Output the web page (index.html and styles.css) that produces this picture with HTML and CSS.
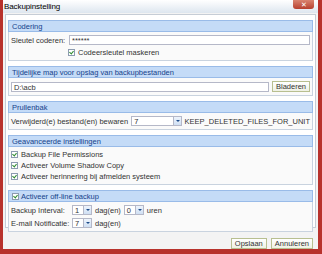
FILE: index.html
```html
<!DOCTYPE html>
<html lang="nl">

<head>
    <meta charset="UTF-8">
    <title>Backupinstelling</title>
    <link rel="stylesheet" href="styles.css">
</head>

<body>
    <div class="window">
        <div class="titlebar">
            <span class="title">Backupinstelling</span>
            <span class="close">&#x2715;</span>
        </div>

        <div class="content">
            <div class="sections">
                <!-- Codering -->
                <div class="panel">
                    <div class="panel-head">Codering</div>
                    <div class="panel-body">
                        <div class="row">
                            <span class="label lbl-key">Sleutel coderen:</span>
                            <span class="field grow">******</span>
                        </div>
                        <div class="row indent">
                            <span class="check"></span>
                            <span class="label">Codeersleutel maskeren</span>
                        </div>
                    </div>
                </div>

                <!-- Tijdelijke map -->
                <div class="panel">
                    <div class="panel-head">Tijdelijke map voor opslag van backupbestanden</div>
                    <div class="panel-body">
                        <div class="row">
                            <span class="field grow">D:\acb</span>
                            <button class="btn">Bladeren</button>
                        </div>
                    </div>
                </div>

                <!-- Prullenbak -->
                <div class="panel">
                    <div class="panel-head">Prullenbak</div>
                    <div class="panel-body">
                        <div class="row">
                            <span class="label">Verwijderd(e) bestand(en) bewaren</span>
                            <span class="combo wide"><span class="field">7</span><span class="arrow"></span></span>
                            <span class="label">KEEP_DELETED_FILES_FOR_UNIT</span>
                        </div>
                    </div>
                </div>

                <!-- Geavanceerde instellingen -->
                <div class="panel">
                    <div class="panel-head">Geavanceerde instellingen</div>
                    <div class="panel-body checks">
                        <div class="row"><span class="check"></span><span class="label">Backup File Permissions</span></div>
                        <div class="row"><span class="check"></span><span class="label">Activeer Volume Shadow Copy</span></div>
                        <div class="row"><span class="check"></span><span class="label">Activeer herinnering bij afmelden systeem</span></div>
                    </div>
                </div>

                <!-- Off-line backup -->
                <div class="panel">
                    <div class="panel-head"><span class="check"></span>Activeer off-line backup</div>
                    <div class="panel-body">
                        <div class="row">
                            <span class="label lbl-int">Backup Interval:</span>
                            <span class="combo"><span class="field">1</span><span class="arrow"></span></span>
                            <span class="label">dag(en)</span>
                            <span class="combo"><span class="field">0</span><span class="arrow"></span></span>
                            <span class="label">uren</span>
                        </div>
                        <div class="row">
                            <span class="label lbl-int">E-mail Notificatie:</span>
                            <span class="combo"><span class="field">7</span><span class="arrow"></span></span>
                            <span class="label">dag(en)</span>
                        </div>
                    </div>
                </div>
            </div>

            <div class="buttons">
                <button class="btn">Opslaan</button>
                <button class="btn">Annuleren</button>
            </div>
        </div>
    </div>
</body>

</html>
```

FILE: styles.css
```css
:root {
    --frame-red: #b8322c;
    --head-bg: #c4dbf7;
    --head-border: #99bbe8;
    --head-text: #15428b;
    --text-color: #333;
    --field-border: #b5b8c8;
    --font-family: "Liberation Sans", Arial, sans-serif;
}

* {
    box-sizing: border-box;
}

body {
    margin: 0;
    width: 322px;
    height: 254px;
    background-color: var(--frame-red);
    font-family: var(--font-family);
    font-size: 7.5px;
    color: var(--text-color);
    overflow: hidden;
}

.window {
    margin: 0 4px 0 3px;
    height: 249px;
    display: flex;
    flex-direction: column;
    background-color: #f3f3f3;
}

.titlebar {
    height: 13px;
    display: flex;
    align-items: center;
    justify-content: space-between;
    padding-left: 1px;
    background: linear-gradient(to bottom, #ffffff, #dde6ef);
}

.title {
    color: #000;
    font-size: 8px;
    letter-spacing: -0.1px;
}

.close {
    width: 21px;
    height: 9px;
    margin-top: -4px;
    margin-right: 4px;
    background: linear-gradient(to bottom, #d9836f, #b7402e);
    border-radius: 0 0 3px 3px;
    color: #fff;
    font-size: 7px;
    line-height: 9px;
    text-align: center;
}

.content {
    flex: 1;
    display: flex;
    flex-direction: column;
    padding: 1px 2px 0 2px;
}

.sections {
    height: 214px;
    background-color: #fff;
    border: 1px solid #c6cdd6;
    padding: 5px 2px 0 2px;
    display: flex;
    flex-direction: column;
    gap: 5px;
}

.panel {
    border: 1px solid #c9d3df;
    border-top: none;
    background-color: #fafafa;
}

.panel-head {
    height: 12px;
    display: flex;
    align-items: center;
    gap: 2px;
    padding-left: 3px;
    background-color: var(--head-bg);
    border: 1px solid var(--head-border);
    margin: 0 -1px;
    color: var(--head-text);
    font-size: 7.5px;
}

.panel-body {
    padding: 3px 2px 3px 2px;
    display: flex;
    flex-direction: column;
    gap: 3px;
}

.panel-body.checks {
    gap: 2px;
}

.row {
    display: flex;
    align-items: center;
    gap: 3px;
    min-height: 9px;
}

.row.indent {
    padding-left: 57px;
}

.label {
    white-space: nowrap;
    color: #333;
}

.lbl-key {
    width: 55px;
}

.lbl-int {
    width: 58px;
}

.field {
    height: 10px;
    line-height: 9px;
    padding-left: 2px;
    background-color: #fff;
    border: 1px solid var(--field-border);
    font-size: 7.5px;
}

.grow {
    flex: 1;
}

.combo {
    display: flex;
    width: 20px;
}

.combo .field {
    flex: 1;
}

.combo.wide {
    width: 56px;
}

.arrow {
    width: 8px;
    height: 10px;
    border: 1px solid var(--field-border);
    border-left: none;
    background: linear-gradient(to bottom, #eef4fc, #cfdff3);
    position: relative;
}

.arrow::after {
    content: "";
    position: absolute;
    left: 2px;
    top: 3px;
    border-left: 2px solid transparent;
    border-right: 2px solid transparent;
    border-top: 2px solid #1d4c8a;
}

.check {
    width: 7px;
    height: 7px;
    border: 1px solid #8c9bb0;
    background-color: #fff;
    position: relative;
    flex: none;
}

.check::after {
    content: "";
    position: absolute;
    left: 1px;
    top: 0;
    width: 2px;
    height: 3px;
    border-right: 1px solid #2e8b2e;
    border-bottom: 1px solid #2e8b2e;
    transform: rotate(40deg);
}

.btn {
    height: 11px;
    padding: 0 3px;
    font-family: var(--font-family);
    font-size: 7.5px;
    line-height: 9px;
    color: #333;
    background: linear-gradient(to bottom, #ffffff, #eef1e4);
    border: 1px solid #b8bf90;
    cursor: pointer;
}

.buttons {
    display: flex;
    justify-content: flex-end;
    gap: 4px;
    padding: 10px 3px 0 0;
}
```
